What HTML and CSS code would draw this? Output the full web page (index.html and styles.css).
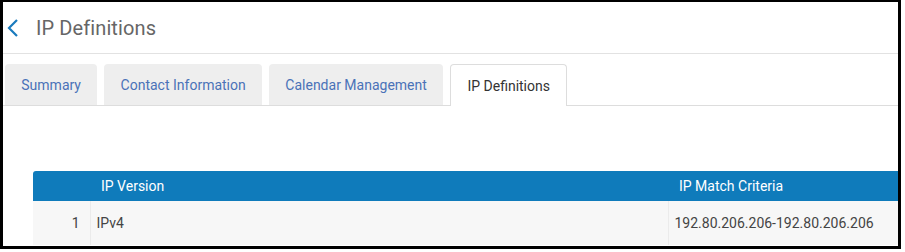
FILE: index.html
```html
<!DOCTYPE html>
<html lang="en">
<head>
  <meta charset="UTF-8">
  <title>IP Definitions</title>
  <link rel="stylesheet" href="styles.css">
</head>
<body>

  <div class="frame">
    <div class="page-header">
      <svg class="back" width="12" height="20" viewBox="0 0 12 20">
        <path d="M10 2 L2 10 L10 18" fill="none" stroke="#1a7bbd" stroke-width="2.2"/>
      </svg>
      <h1>IP Definitions</h1>
    </div>

    <div class="tabs">
      <div class="tab">Summary</div>
      <div class="tab">Contact Information</div>
      <div class="tab">Calendar Management</div>
      <div class="tab active">IP Definitions</div>
    </div>

    <div class="content">
      <table class="grid">
        <colgroup>
          <col class="c-num">
          <col class="c-ver">
          <col>
        </colgroup>
        <thead>
          <tr>
            <th class="num"></th>
            <th>IP Version</th>
            <th>IP Match Criteria</th>
          </tr>
        </thead>
        <tbody>
          <tr>
            <td class="num">1</td>
            <td>IPv4</td>
            <td>192.80.206.206-192.80.206.206</td>
          </tr>
        </tbody>
      </table>
    </div>
  </div>

</body>
</html>
```

FILE: styles.css
```css
body {
  margin: 0;
  font-family: Roboto, "Liberation Sans", sans-serif;
  background-color: white;
}

.frame {
  width: 895px;
  height: 244px;
  border-style: solid;
  border-color: black;
  border-width: 2px 3px 3px 3px;
  overflow: hidden;
}

.page-header {
  display: flex;
  align-items: center;
  height: 51px;
  border-bottom: 1px solid #e2e2e2;
}

.back {
  margin-left: 4px;
  margin-top: 1px;
}

h1 {
  margin: 0 0 0 17px;
  font-size: 20px;
  font-weight: normal;
  color: #666;
  letter-spacing: 0.1px;
}

.tabs {
  display: flex;
  gap: 7px;
  margin-top: 10px;
  padding-left: 2px;
  border-bottom: 1px solid #ddd;
}

.tab {
  height: 39px;
  padding: 2px 16.3px 0 16.3px;
  line-height: 39px;
  font-size: 14px;
  color: #4a72b8;
  background-color: #eeeeee;
  border-radius: 4px 4px 0 0;
}

.tab.active {
  background-color: white;
  color: #333;
  border: 1px solid #ddd;
  border-bottom: none;
  margin-bottom: -1px;
  height: 39px;
}

.content {
  padding: 65px 0 0 30px;
}

.grid {
  width: 900px;
  table-layout: fixed;
  border-collapse: collapse;
  font-size: 14px;
}

.c-num {
  width: 57px;
}

.c-ver {
  width: 578px;
}

.grid th {
  background-color: #0f7bbb;
  color: white;
  font-weight: normal;
  text-align: left;
  height: 30px;
  padding: 0 0 0 11px;
}

.grid th:first-child {
  border-top-left-radius: 3px;
}

.grid td {
  background-color: #f7f7f7;
  color: #444;
  height: 44px;
  padding: 0 0 0 6px;
  border-left: 1px solid #ebebeb;
}

.grid .num {
  text-align: right;
  padding: 0 10px 0 0;
  border-left: none;
}
```
